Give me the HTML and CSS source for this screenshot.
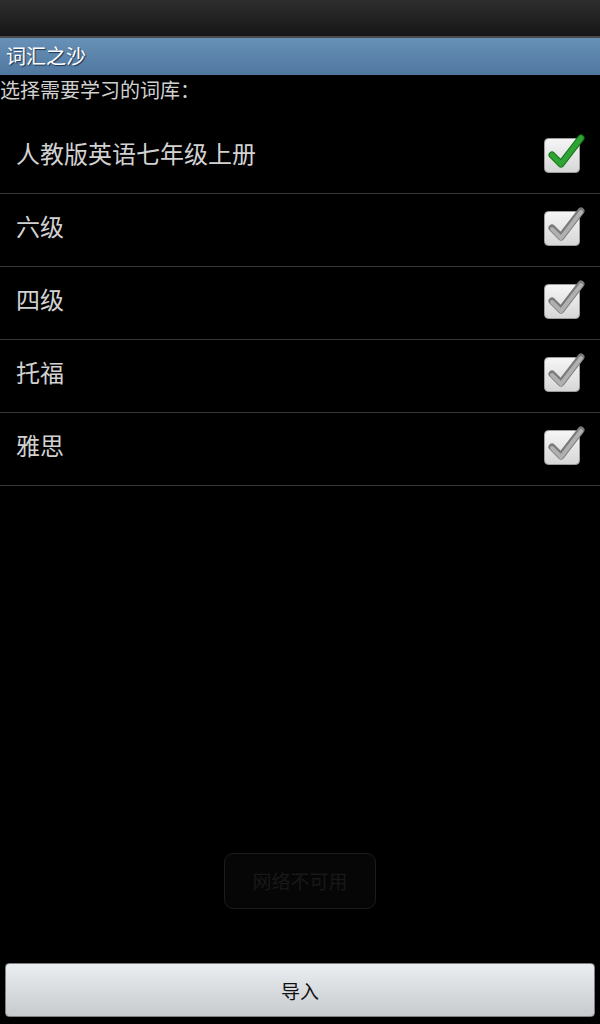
FILE: index.html
```html
<!doctype html>
<html lang="zh-CN">
<head>
<meta charset="UTF-8">
<title>词汇之沙</title>
<link rel="stylesheet" href="styles.css">
</head>
<body>
	<div class="screen">
		<div class="statusbar"></div>
		<div class="titlebar">词汇之沙</div>
		<div class="prompt">选择需要学习的词库<span class="colon">：</span></div>
		<ul class="booklist">
			<li class="book">
				<span class="book-name">人教版英语七年级上册</span>
				<svg class="check" width="42" height="42" viewBox="0 0 42 42">
					<defs>
						<linearGradient id="boxg" x1="0" y1="0" x2="0" y2="1">
							<stop offset="0" stop-color="#f6f6f6"/>
							<stop offset="1" stop-color="#d6d6d6"/>
						</linearGradient>
					</defs>
					<rect x="0.5" y="4.5" width="35" height="34" rx="4" fill="url(#boxg)" stroke="#9c9c9c"/>
					<path d="M8 21 L17 30 L37 4" fill="none" stroke="#16761a" stroke-width="7" stroke-linecap="round" stroke-linejoin="round"/>
					<path d="M8 21 L17 30 L37 4" fill="none" stroke="#2fa333" stroke-width="5" stroke-linecap="round" stroke-linejoin="round"/>
				</svg>
			</li>
			<li class="book">
				<span class="book-name">六级</span>
				<svg class="check" width="42" height="42" viewBox="0 0 42 42">
					<rect x="0.5" y="4.5" width="35" height="34" rx="4" fill="url(#boxg)" stroke="#9c9c9c"/>
					<path d="M8 21 L17 30 L37 4" fill="none" stroke="#7a7a7a" stroke-width="7" stroke-linecap="round" stroke-linejoin="round"/>
					<path d="M8 22 L17 31 L37 5" fill="none" stroke="#b0b0b0" stroke-width="4" stroke-linecap="round" stroke-linejoin="round"/>
				</svg>
			</li>
			<li class="book">
				<span class="book-name">四级</span>
				<svg class="check" width="42" height="42" viewBox="0 0 42 42">
					<rect x="0.5" y="4.5" width="35" height="34" rx="4" fill="url(#boxg)" stroke="#9c9c9c"/>
					<path d="M8 21 L17 30 L37 4" fill="none" stroke="#7a7a7a" stroke-width="7" stroke-linecap="round" stroke-linejoin="round"/>
					<path d="M8 22 L17 31 L37 5" fill="none" stroke="#b0b0b0" stroke-width="4" stroke-linecap="round" stroke-linejoin="round"/>
				</svg>
			</li>
			<li class="book">
				<span class="book-name">托福</span>
				<svg class="check" width="42" height="42" viewBox="0 0 42 42">
					<rect x="0.5" y="4.5" width="35" height="34" rx="4" fill="url(#boxg)" stroke="#9c9c9c"/>
					<path d="M8 21 L17 30 L37 4" fill="none" stroke="#7a7a7a" stroke-width="7" stroke-linecap="round" stroke-linejoin="round"/>
					<path d="M8 22 L17 31 L37 5" fill="none" stroke="#b0b0b0" stroke-width="4" stroke-linecap="round" stroke-linejoin="round"/>
				</svg>
			</li>
			<li class="book">
				<span class="book-name">雅思</span>
				<svg class="check" width="42" height="42" viewBox="0 0 42 42">
					<rect x="0.5" y="4.5" width="35" height="34" rx="4" fill="url(#boxg)" stroke="#9c9c9c"/>
					<path d="M8 21 L17 30 L37 4" fill="none" stroke="#7a7a7a" stroke-width="7" stroke-linecap="round" stroke-linejoin="round"/>
					<path d="M8 22 L17 31 L37 5" fill="none" stroke="#b0b0b0" stroke-width="4" stroke-linecap="round" stroke-linejoin="round"/>
				</svg>
			</li>
		</ul>
		<div class="spacer"></div>
		<div class="footer">
			<button class="import-button">导入</button>
		</div>
		<div class="toast">网络不可用</div>
	</div>
</body>
</html>
```

FILE: styles.css
```css
body {
	margin: 0;
	padding: 0;
	background-color: #000;
	font-family: "Noto Sans CJK SC", "Noto Sans", sans-serif;
}

.screen {
	position: relative;
	width: 600px;
	height: 1024px;
	display: flex;
	flex-direction: column;
	overflow: hidden;
}

.statusbar {
	height: 36px;
	background: linear-gradient(#2e2e2e, #161616);
	border-bottom: 2px solid #4a4a4a;
}

.titlebar {
	height: 37px;
	line-height: 36px;
	padding-left: 6px;
	font-size: 20px;
	color: #fff;
	text-shadow: 1px 1px 1px #1e3550;
	background: linear-gradient(#6891b8, #4f779f);
}

.prompt {
	height: 46px;
	line-height: 30px;
	font-size: 20px;
	color: #d0d0d0;
}

.colon {
	display: inline-block;
	width: 20px;
	text-align: center;
}

.booklist {
	list-style: none;
	margin: 0;
	padding: 0;
}

.book {
	height: 72px;
	border-bottom: 1px solid #383838;
	display: flex;
	align-items: center;
	justify-content: space-between;
	padding: 0 14px 0 16px;
}

.book-name {
	font-size: 24px;
	color: #d2d2d2;
	margin-top: -10px;
}

.check {
	margin-top: -5px;
}

.spacer {
	flex: 1;
}

.footer {
	padding: 0 5px 7px;
}

.import-button {
	width: 100%;
	height: 54px;
	border: 1px solid #7d8084;
	border-radius: 4px;
	background: linear-gradient(#eaeef0, #c8cbce);
	font-family: "Noto Sans CJK SC", "Noto Sans", sans-serif;
	font-size: 19px;
	color: #111;
	padding: 0;
}

.toast {
	position: absolute;
	left: 224px;
	top: 853px;
	width: 150px;
	height: 54px;
	line-height: 54px;
	text-align: center;
	border: 1px solid #1c1c1c;
	border-radius: 9px;
	background-color: #060606;
	color: #181818;
	font-size: 19px;
}
```
